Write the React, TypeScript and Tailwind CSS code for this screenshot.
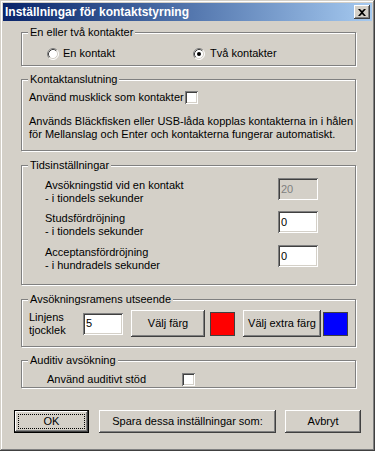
import React from "react";

const RAISED =
  "shadow-[inset_-1px_-1px_#404040,inset_1px_1px_#fff,inset_-2px_-2px_#808080,inset_2px_2px_#d4d0c8]";
const SUNKEN =
  "shadow-[inset_1px_1px_#808080,inset_-1px_-1px_#fff,inset_2px_2px_#404040,inset_-2px_-2px_#d4d0c8]";

function GroupBox({
  label,
  className,
  children,
}: {
  label: string;
  className: string;
  children?: React.ReactNode;
}) {
  return (
    <div
      className={`relative box-border w-[335px] border border-[#808080] shadow-[inset_1px_1px_0_#fff,1px_1px_0_#fff] ${className}`}
    >
      <span className="absolute left-[6px] top-[-7px] whitespace-nowrap bg-[#d4d0c8] px-[2px] leading-[13px]">
        {label}
      </span>
      {children}
    </div>
  );
}

function Radio({ checked }: { checked?: boolean }) {
  return (
    <svg width="12" height="12" viewBox="0 0 12 12" className="shrink-0">
      <circle cx="6" cy="6" r="5" fill="#fff" />
      <path d="M2.11 9.89 A5.5 5.5 0 0 1 9.89 2.11" fill="none" stroke="#808080" strokeWidth="1" />
      <path d="M9.89 2.11 A5.5 5.5 0 0 1 2.11 9.89" fill="none" stroke="#ffffff" strokeWidth="1" />
      <path d="M2.82 9.18 A4.5 4.5 0 0 1 9.18 2.82" fill="none" stroke="#404040" strokeWidth="1" />
      <path d="M9.18 2.82 A4.5 4.5 0 0 1 2.82 9.18" fill="none" stroke="#d4d0c8" strokeWidth="1" />
      {checked && <circle cx="6" cy="6" r="2" fill="#000" />}
    </svg>
  );
}

function Checkbox() {
  return <div className={`h-[13px] w-[13px] shrink-0 bg-white ${SUNKEN}`} />;
}

function TextBox({ value, disabled }: { value: string; disabled?: boolean }) {
  return (
    <div
      className={`flex h-[22px] w-[40px] shrink-0 items-center pl-[3px] ${SUNKEN} ${
        disabled ? "bg-[#d4d0c8] text-[#808080]" : "bg-white text-black"
      }`}
    >
      {value}
    </div>
  );
}

function Button({
  children,
  className,
}: {
  children: React.ReactNode;
  className: string;
}) {
  return (
    <div
      className={`flex shrink-0 items-center justify-center whitespace-nowrap bg-[#d4d0c8] ${RAISED} ${className}`}
    >
      {children}
    </div>
  );
}

export default function App() {
  return (
    <div
      className={`box-border h-[451px] w-[375px] overflow-hidden bg-[#d4d0c8] p-[3px] text-[11px] leading-[13px] text-black font-['Liberation_Sans',Arial,sans-serif] shadow-[inset_-1px_-1px_#404040,inset_1px_1px_#d4d0c8,inset_-2px_-2px_#808080,inset_2px_2px_#fff]`}
    >
      {/* Title bar */}
      <div className="flex h-[18px] items-center justify-between bg-gradient-to-r from-[#0a246a] to-[#a6caf0] pl-[2px] pr-[2px]">
        <span className="whitespace-nowrap text-[12px] font-bold leading-[14px] text-white">
          Inställningar för kontaktstyrning
        </span>
        <div className={`flex h-[14px] w-[16px] items-center justify-center bg-[#d4d0c8] ${RAISED}`}>
          <svg width="8" height="7" viewBox="0 0 8 7">
            <path d="M0 0 L2 0 L4 2 L6 0 L8 0 L5 3.5 L8 7 L6 7 L4 5 L2 7 L0 7 L3 3.5 Z" fill="#000" />
          </svg>
        </div>
      </div>

      {/* Group boxes */}
      <div className="flex flex-col pl-[18px]">
        <GroupBox label="En eller två kontakter" className="mt-[11px] h-[34px] pl-[25px] pt-[14px]">
          <div className="flex items-center">
            <div className="flex w-[146px] items-center gap-[4px]">
              <Radio />
              <span>En kontakt</span>
            </div>
            <div className="flex items-center gap-[5px]">
              <Radio checked />
              <span>Två kontakter</span>
            </div>
          </div>
        </GroupBox>

        <GroupBox label="Kontaktanslutning" className="mt-[13px] h-[72px] pl-[7px] pt-[11px]">
          <div className="flex items-center gap-[1px]">
            <span>Använd musklick som kontakter</span>
            <Checkbox />
          </div>
          <p className="mt-[11px] leading-[13px]">
            Används Bläckfisken eller USB-låda kopplas kontakterna in i hålen
            <br />
            för Mellanslag och Enter och kontakterna fungerar automatiskt.
          </p>
        </GroupBox>

        <GroupBox label="Tidsinställningar" className="mt-[14px] h-[120px] pl-[23px] pt-[12px]">
          <div className="flex flex-col">
            <div className="flex h-[22px] items-start">
              <div className="w-[233px] pt-[1px]">
                Avsökningstid vid en kontakt
                <br />- i tiondels sekunder
              </div>
              <TextBox value="20" disabled />
            </div>
            <div className="mt-[11px] flex h-[22px] items-start">
              <div className="w-[233px] pt-[1px]">
                Studsfördröjning
                <br />- i tiondels sekunder
              </div>
              <TextBox value="0" />
            </div>
            <div className="mt-[12px] flex h-[22px] items-start">
              <div className="w-[233px] pt-[1px]">
                Acceptansfördröjning
                <br />- i hundradels sekunder
              </div>
              <TextBox value="0" />
            </div>
          </div>
        </GroupBox>

        <GroupBox label="Avsökningsramens utseende" className="mt-[14px] h-[48px] pl-[7px] pt-[10px]">
          <div className="flex h-[27px] items-center">
            <div className="w-[54px]">
              Linjens
              <br />
              tjocklek
            </div>
            <TextBox value="5" />
            <Button className="ml-[8px] h-[27px] w-[74px]">Välj färg</Button>
            <div className="ml-[5px] h-[24px] w-[25px] border border-[#404040] bg-[#ff0000]" />
            <Button className="ml-[8px] h-[27px] w-[78px]">Välj extra färg</Button>
            <div className="ml-[2px] h-[24px] w-[25px] border border-[#404040] bg-[#0000ff]" />
          </div>
        </GroupBox>

        <GroupBox label="Auditiv avsökning" className="mt-[13px] h-[28px] pl-[25px] pt-[12px]">
          <div className="flex items-center">
            <span className="w-[135px]">Använd auditivt stöd</span>
            <Checkbox />
          </div>
        </GroupBox>
      </div>

      {/* Buttons */}
      <div className="mt-[22px] flex items-center pl-[11px]">
        <div className="relative h-[23px] w-[75px] border border-black bg-[#d4d0c8]">
          <div className={`flex h-full w-full items-center justify-center ${RAISED}`}>OK</div>
          <div className="pointer-events-none absolute inset-[3px] border border-dotted border-black" />
        </div>
        <Button className="ml-[10px] h-[23px] w-[177px]">Spara dessa inställningar som:</Button>
        <Button className="ml-[9px] h-[23px] w-[76px]">Avbryt</Button>
      </div>
    </div>
  );
}
